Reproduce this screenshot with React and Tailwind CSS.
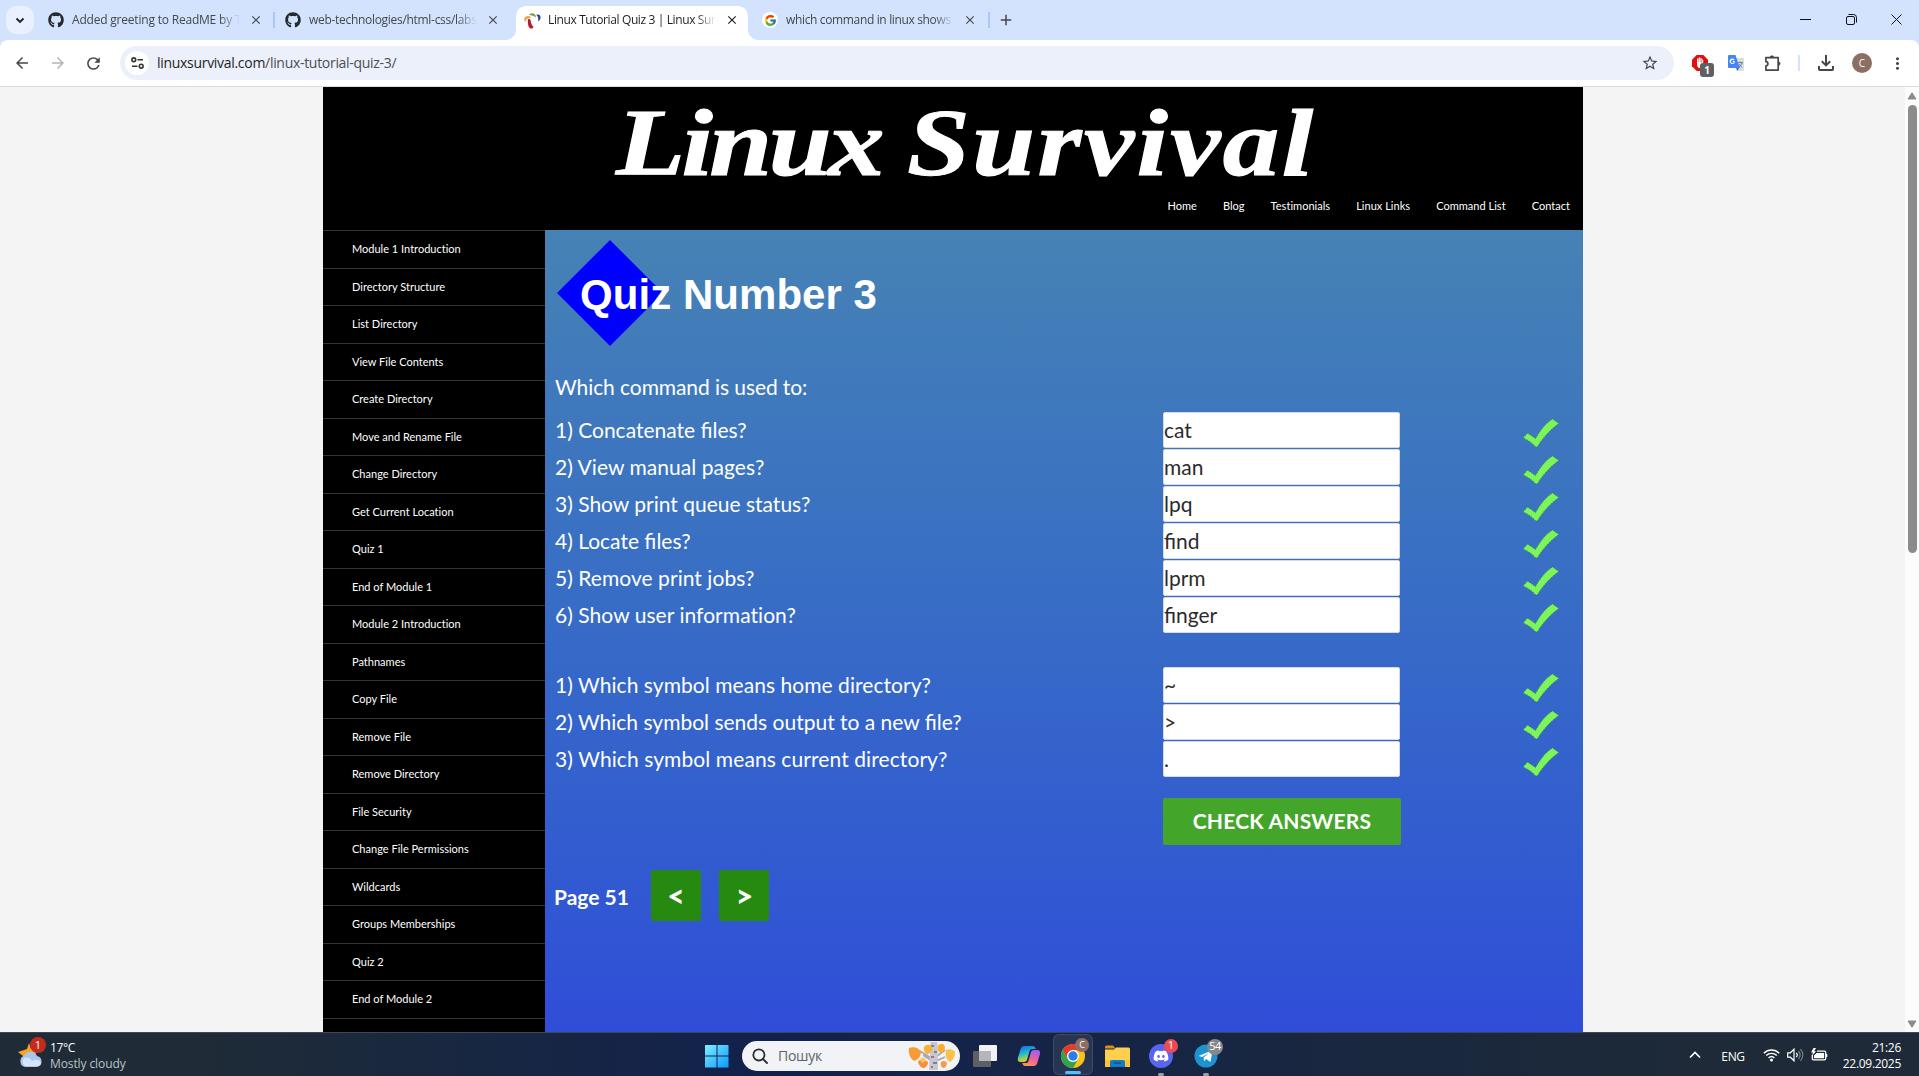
import React from 'react';
import { FaGithub, FaDiscord } from 'react-icons/fa';
import { FcGoogle } from 'react-icons/fc';
import { MdArrowBack, MdArrowForward, MdRefresh, MdStarBorder, MdMoreVert, MdClose, MdAdd } from 'react-icons/md';

const MODULES = [
  'Module 1 Introduction', 'Directory Structure', 'List Directory', 'View File Contents', 'Create Directory',
  'Move and Rename File', 'Change Directory', 'Get Current Location', 'Quiz 1', 'End of Module 1',
  'Module 2 Introduction', 'Pathnames', 'Copy File', 'Remove File', 'Remove Directory', 'File Security',
  'Change File Permissions', 'Wildcards', 'Groups Memberships', 'Quiz 2', 'End of Module 2',
];

const COMMANDS = [
  ['1) Concatenate files?', 'cat', ''],
  ['2) View manual pages?', 'man', 'tracking-[0.05px]'],
  ['3) Show print queue status?', 'lpq', ''],
  ['4) Locate files?', 'find', ''],
  ['5) Remove print jobs?', 'lprm', 'tracking-[0.05px]'],
  ['6) Show user information?', 'finger', 'tracking-[0.05px]'],
];

const SYMBOLS = [
  ['1) Which symbol means home directory?', '~', 'tracking-[0.05px]'],
  ['2) Which symbol sends output to a new file?', '>', 'word-spacing-tight'],
  ['3) Which symbol means current directory?', '.', 'tracking-[0.09px]'],
];

function SiteMark() {
  return (
    <svg width="17" height="17" viewBox="0 0 16 16" className="shrink-0">
      <path d="M4.500 2.600C6.500.4 9.500.6 11 3.200c.3.700.2 1.400-.3 1.900C9.400 3.400 7 3.200 4.500 2.600z" fill="#7aa64a" />
      <path d="M11.600 2.600c2-1 4 .2 4 2.600 0 1.800-.9 3-2.400 3.400.6-2 .2-4.400-1.600-6z" fill="#2f4390" />
      <path d="M.3 7C.3 4.400 2.500 3 5.600 4.200c.8.400 1 1 .8 1.500C4.300 5.200 2.300 6.200 1.600 9.200.7 8.800.3 8 .3 7z" fill="#f0a54a" />
      <path d="M3.900 6.800c1.100-.6 2.300-.1 2.400 1.200.2 2.300.9 4.200 2.700 6-1.200 2-3.300 2.200-4.300.3C3.700 12.400 3.300 9 3.900 6.800z" fill="#b3202c" />
    </svg>
  );
}

function Tab({ icon, title, titleClass, active }) {
  return (
    <div className={active
      ? 'relative flex h-[34px] w-[232px] items-center rounded-t-[10px] bg-white pl-2'
      : 'flex h-[28px] w-[232px] items-center pl-2'}
    >
      {active && (
        <>
          <span className="absolute bottom-0 -left-2.5 size-2.5 bg-[radial-gradient(circle_at_0_0,transparent_9.5px,white_10px)]" />
          <span className="absolute bottom-0 -right-2.5 size-2.5 bg-[radial-gradient(circle_at_100%_0,transparent_9.5px,white_10px)]" />
        </>
      )}
      <span className={active ? 'flex w-4 -translate-y-[3px] justify-center' : 'flex w-4 justify-center'}>{icon}</span>
      <span className={`ml-2 w-[168px] overflow-hidden text-xs whitespace-nowrap [mask-image:linear-gradient(to_right,black_88%,transparent)] ${titleClass} ${active ? '-translate-y-[3px] text-[#1f1f1f]' : 'text-[#45474a]'}`}>{title}</span>
      <MdClose className={active ? 'ml-[9px] size-3.5 -translate-y-[3px] text-[#1f1f1f]' : 'ml-[9px] size-3.5 text-[#45474a]'} />
    </div>
  );
}

function TabStrip() {
  return (
    <div className="flex h-10 bg-[#d3e3fd]">
      <div className="flex items-start pt-1.5 pl-1.5">
        <div className="flex size-7 items-center justify-center rounded-[10px] bg-[#e9f1fe]">
          <svg width="10" height="7" viewBox="0 0 10 7" fill="none" stroke="#1f1f1f" strokeWidth="1.800"><path d="M1.500 1.500L5 5l3.500-3.500" /></svg>
        </div>
        <div className="ml-1.5 flex">
          <Tab icon={<FaGithub className="size-4 shrink-0 text-[#24292f]" />} title="Added greeting to ReadME by T" titleClass="tracking-[-0.2px]" />
        </div>
        <span className="mt-1.5 ml-px h-4 w-0.5 bg-[#a8c7fa]" />
        <div className="ml-[2px] flex">
          <Tab icon={<FaGithub className="size-4 shrink-0 text-[#24292f]" />} title="web-technologies/html-css/labs" titleClass="tracking-[-0.3px]" />
        </div>
        <div className="ml-[7px] flex">
          <Tab active icon={<SiteMark />} title="Linux Tutorial Quiz 3 | Linux Surv" titleClass="tracking-[-0.38px]" />
        </div>
        <div className="ml-[6px] flex">
          <Tab icon={<span className="flex size-4 shrink-0 items-center justify-center rounded-full bg-white"><FcGoogle className="size-[13px]" /></span>} title="which command in linux shows" titleClass="tracking-[-0.35px]" />
        </div>
        <span className="mt-1.5 ml-[2px] h-4 w-0.5 bg-[#a8c7fa]" />
        <MdAdd className="mt-[5px] ml-[7px] size-[18px] text-[#45474a]" />
      </div>
      <div className="ml-auto flex w-[138px] items-center justify-between pr-[17px] pb-px pl-[19px]">
        <svg width="11" height="11" viewBox="0 0 11 11" stroke="#111"><path d="M0 5.500h11" /></svg>
        <svg width="11" height="11" viewBox="0 0 11 11" fill="none" stroke="#111"><rect x=".5" y="2.500" width="8" height="8" rx="1.500" /><path d="M2.500.5h5a3 3 0 0 1 3 3v5" /></svg>
        <svg width="11" height="11" viewBox="0 0 11 11" stroke="#111"><path d="M.5.5l10 10M10.500.5l-10 10" /></svg>
      </div>
    </div>
  );
}

function Toolbar() {
  return (
    <div className="bg-[#d3e3fd]">
      <div className="flex h-[47px] items-center rounded-t-lg border-b border-[#dcdcdc] bg-white pl-[13px]">
        <MdArrowBack className="size-[18px] text-[#45474a]" />
        <MdArrowForward className="ml-[18px] size-[18px] text-[#b4b5b7]" />
        <MdRefresh className="ml-[17px] size-[19px] text-[#45474a]" />
        <div className="ml-[17px] flex h-[34px] w-[1554px] items-center rounded-full bg-[#ebf0fa] pl-[5px]">
          <span className="flex size-6 items-center justify-center rounded-full bg-white">
            <svg width="13" height="12" viewBox="0 0 13 12" fill="none" stroke="#333" strokeWidth="1.600">
              <circle cx="2.800" cy="2.800" r="1.900" /><path d="M6.500 2.800H12M1 9.200h5.500" /><circle cx="10.200" cy="9.200" r="1.900" />
            </svg>
          </span>
          <span className="ml-2 text-sm tracking-[-0.3px] text-[#1f1f1f]">linuxsurvival.com<span className="text-[#4b4e52]">/linux-tutorial-quiz-3/</span></span>
          <MdStarBorder className="mr-[15px] ml-auto size-[18px] text-[#45474a]" />
        </div>
        <div className="relative ml-[18px] size-4">
          <svg width="16" height="16" viewBox="0 0 16 16">
            <path d="M4.700 0h6.600L16 4.700v6.600L11.300 16H4.700L0 11.300V4.700z" fill="#e40d0d" />
            <path d="M5 8V4.200c0-.9 1.200-.9 1.200 0V7h.4V2.900c0-.9 1.300-.9 1.300 0V7h.4V3.300c0-.9 1.300-.9 1.300 0V8h.4V5c0-.9 1.200-.9 1.200 0v5c0 2-1.200 3.200-3 3.200-1.500 0-2.200-.6-2.900-1.900z" fill="#fff" />
          </svg>
          <span className="absolute top-2 left-2 flex size-3.5 items-center justify-center rounded-[3px] bg-[#5f6062] text-[10px] font-bold text-white">1</span>
        </div>
        <svg width="16" height="16" viewBox="0 0 16 16" className="ml-5">
          <path d="M6 3h9a1 1 0 0 1 1 1v11a1 1 0 0 1-1 1H9z" fill="#dcdddf" />
          <path d="M9 16l-1-4h4z" fill="#3367d6" />
          <path d="M1 0h6.500l4.200 13H1a1 1 0 0 1-1-1V1a1 1 0 0 1 1-1z" fill="#4285f4" />
          <path d="M7 6.200H4.700v1.100h1.200c-.2.600-.7.900-1.300.9a1.600 1.600 0 1 1 1-2.800l.8-.8a2.700 2.700 0 1 0 .6 1.600z" fill="#fff" />
          <path d="M9.800 7.600H15M12.400 6.600v1M14 7.600c-.5 2.200-1.700 3.600-3 4.500M11 9c.9 1.600 2 2.600 3.200 3.200" stroke="#607988" strokeWidth=".9" fill="none" />
        </svg>
        <svg width="18" height="18" viewBox="0 0 18 18" className="ml-5" fill="none" stroke="#45474a" strokeWidth="1.700">
          <path d="M1.900 3.600h12.300v12.500H1.900v-4.200c2.700-.2 2.700-4 0-4.200z" strokeLinejoin="round" />
          <path d="M6 3.600a1.900 1.900 0 0 1 3.800 0zM14.200 7.700a1.900 1.900 0 0 1 0 3.800z" fill="#45474a" strokeWidth=".7" />
        </svg>
        <span className="ml-4 h-4 w-0.5 bg-[#d3e3fd]" />
        <svg width="16" height="16" viewBox="0 0 16 16" className="ml-[18px]" fill="none" stroke="#45474a" strokeWidth="2">
          <path d="M8 0v10M3.800 6.200L8 10.400l4.200-4.200M1 11v3.200c0 .5.300.8.800.8h12.400c.5 0 .8-.3.800-.8V11" />
        </svg>
        <span className="ml-[18px] flex size-5 items-center justify-center rounded-full bg-[#8d6e63] text-[10px] text-white">C</span>
        <MdMoreVert className="ml-[16px] size-[19px] text-[#45474a]" />
      </div>
    </div>
  );
}

function CheckMark() {
  return (
    <svg width="38" height="30" viewBox="0 0 38 30" className="mt-1.5 shrink-0">
      <path d="M1 20l4.500-5L13.500 20.500C19 11 24.500 4.500 30.500 1L37 5.500C28.500 11.500 21 19.500 15.500 28.800H13.500C10 25 6 22 1 20z" fill="#7cf55a" stroke="#3c8a5c" strokeWidth="1" strokeDasharray="1.500 1.200" />
    </svg>
  );
}

function QuizRow({ question, answer, spacing }) {
  return (
    <div className="flex h-[37px] items-start">
      <span className={`-ml-px w-[608px] pt-[2px] leading-[31px] ${spacing}`}>{question}</span>
      <span className="h-9 w-[237px] rounded-[2px] border border-[#d5dbe3] bg-white pt-px leading-[31px] text-[#2b2b2b]">{answer}</span>
      <span className="ml-[122px]"><CheckMark /></span>
    </div>
  );
}

function Site() {
  return (
    <div className="flex w-[1260px] flex-col font-['Lato',sans-serif] text-white">
      <header className="flex h-[143px] flex-col bg-black">
        <div className="flex h-[107px] items-start pt-[2px] pl-[293px]">
          <h1 className="flex origin-left scale-x-[1.190] gap-[22px] font-['Liberation_Serif',serif] text-[95px] leading-[108px] font-bold whitespace-nowrap italic [-webkit-text-stroke:1px_white]">
            <span className="tracking-[-3px]">Linux</span> <span className="tracking-[2px]">Survival</span>
          </h1>
        </div>
        <nav className="flex justify-end gap-[26px] pr-[13px] text-[11px] leading-6 tracking-[0.03px]">
          <span>Home</span><span>Blog</span><span>Testimonials</span><span>Linux Links</span><span>Command List</span><span>Contact</span>
        </nav>
      </header>
      <div className="flex flex-1">
        <aside className="w-[222px] bg-black text-[11px] tracking-[0.01px]">
          {MODULES.map((m) => (
            <div key={m} className="flex h-[37.530px] items-center border-t border-[#333] pl-[29px]">{m}</div>
          ))}
          <div className="border-t border-[#333]" />
        </aside>
        <main className="flex-1 bg-linear-to-b from-[#4682b4] to-[#304dd8] pt-2.5 pl-[11px] text-[21px]">
          <div className="relative flex h-[107px] items-center">
            <svg width="108" height="107" viewBox="0 0 108 107" className="absolute top-0 left-0"><path d="M54 0l53 53L54 106 1 53z" fill="#00f" /></svg>
            <h2 className="relative ml-[24px] pt-[3px] font-['Liberation_Sans',sans-serif] text-[42px] leading-[48px] font-bold tracking-[0.05px] whitespace-nowrap">Quiz Number 3</h2>
          </div>
          <p className="mt-[24px] -ml-px leading-[31px] tracking-[-0.08px]">Which command is used to:</p>
          <div className="mt-[10px]">{COMMANDS.map(([q, a, s]) => <QuizRow key={q} question={q} answer={a} spacing={s} />)}</div>
          <div className="mt-[33px]">{SYMBOLS.map(([q, a, s]) => <QuizRow key={q} question={q} answer={a} spacing={s} />)}</div>
          <div className="mt-5 ml-[607px] flex h-[47px] w-[238px] items-center justify-center rounded-[2px] bg-[#43a62b] pb-0.5 font-bold tracking-[0.2px]">CHECK ANSWERS</div>
          <div className="mt-[25px] flex h-[51px] items-center font-bold">
            <span className="-ml-[2px] w-[97px] pt-0.5">Page 51</span>
            <span className="flex h-[51px] w-[50px] items-center justify-center rounded-[2px] bg-[#268a10] pb-px text-[30px] font-black">&lt;</span>
            <span className="ml-[18px] flex h-[51px] w-[50px] items-center justify-center rounded-[2px] bg-[#268a10] pb-px pl-px text-[30px] font-black">&gt;</span>
          </div>
        </main>
      </div>
    </div>
  );
}

function Scrollbar() {
  return (
    <div className="ml-auto flex w-3.5 flex-col items-center bg-[#fcfcfc] pt-[5px] pb-1">
      <svg width="10" height="8" viewBox="0 0 10 8"><path d="M5 .8L9 7H1z" fill="#8b8b8b" stroke="#8b8b8b" strokeLinejoin="round" /></svg>
      <div className="mt-[5px] h-[448px] w-[9px] rounded-full bg-[#8b8b8b]" />
      <svg width="10" height="8" viewBox="0 0 10 8" className="mt-auto"><path d="M5 7.200L9 1H1z" fill="#8b8b8b" stroke="#8b8b8b" strokeLinejoin="round" /></svg>
    </div>
  );
}

function Weather() {
  return (
    <div className="flex w-[230px] items-center pt-px pl-[18px] text-xs leading-4">
      <div className="relative h-7 w-[26px]">
        <svg width="26" height="28" viewBox="0 0 26 28">
          <path d="M11 2l2 6 6 2-3 6-8 4-3-5-5-4 6-2 3-1z" fill="#f7a325" />
          <path d="M7 26a6 6 0 0 1-.6-11.500A7 7 0 0 1 19 15a5.600 5.600 0 0 1 0 11z" fill="#a9c6f2" />
          <path d="M7 25a5 5 0 0 1-1-8 7 7 0 0 1 8 3c3-2 8-2 9 2-.5 2-2 3-4 3z" fill="#d7e5fb" />
        </svg>
        <span className="absolute -top-1 left-3 flex size-4 items-center justify-center rounded-full bg-[#c42b1c] text-[11px] text-white">1</span>
      </div>
      <div className="ml-1.5 pt-0.5 text-white">
        <div className="tracking-[-0.35px]">17°C</div>
        <div className="tracking-[-0.1px] text-[#bcc3c9]">Mostly cloudy</div>
      </div>
    </div>
  );
}

function AutumnTree() {
  return (
    <svg width="48" height="29" viewBox="0 0 48 29">
      <path d="M23 17L12 10M24 20l-9-6M29 15l8-6M28 20l9-4M20 13l-3-6" stroke="#a7a4ad" strokeWidth="1.600" />
      <path d="M22.500 1h7l.5 28h-9z" fill="#c9c6d0" />
      <path d="M23 5h3M26 11h3M23 16h3M25 22h4M23 26h2" stroke="#6e6b78" strokeWidth="1.300" />
      <path d="M1 7c5-2 11 0 12 5-1 5-4 7-7 8-4-3-6-8-5-13z" fill="#f99a35" />
      <path d="M16 6c2-3 6-3 8 0 1 4-2 6-5 7-2-1-4-4-3-7z" fill="#f9b233" />
      <path d="M30 5c2-3 6-3 7 1 0 3-2 5-4 6-3-1-4-4-3-7z" fill="#fbad2e" />
      <path d="M38 9c4-2 8 0 9 2 0 5-2 8-5 10-4-2-5-7-4-12z" fill="#fcc14b" />
      <path d="M10 20c3-2 8-1 10 1 0 4-3 6-5 6-3-1-5-4-5-7z" fill="#f98f3d" />
      <path d="M33 21c3-2 5-1 6 1 0 3-2 5-4 5-2-1-3-4-2-6z" fill="#fa9a4b" />
      <path d="M13 17c2-1 4 0 5 2-1 2-3 3-4 3-1-1-2-3-1-5z" fill="#fdc75a" />
    </svg>
  );
}

function Chrome() {
  return (
    <svg width="24" height="24" viewBox="0 0 24 24">
      <circle cx="12" cy="12" r="12" fill="#fbc116" />
      <path d="M12 6h10.400A12 12 0 0 0 1.600 6l5.200 9z" fill="#e33b2e" />
      <path d="M1.600 6l5.200 9L12 18l5.200-3L12 24A12 12 0 0 1 1.600 6z" fill="#2fa350" />
      <circle cx="12" cy="12" r="6" fill="#fff" />
      <circle cx="12" cy="12" r="4.700" fill="#2b7de9" />
    </svg>
  );
}

function Taskbar() {
  return (
    <div className="flex h-11 border-t border-[#3e4853] bg-linear-to-r from-[#1f2b36] via-[#12214c] to-[#1e2a37] from-10% via-40% to-90% font-['Open_Sans',sans-serif]">
      <Weather />
      <div className="ml-[475px] flex items-center">
        <svg width="24" height="24" viewBox="0 0 24 24" className="translate-y-px">
          <defs><linearGradient id="win" x1="0" y1="0" x2="1" y2="1"><stop offset="0" stopColor="#7df0ff" /><stop offset="1" stopColor="#0a98ff" /></linearGradient></defs>
          <path d="M0 1.500Q0 1 .5 1H11.500V11.500H0zM12.500 1H23q.5 0 .5.500v10H12.500zM0 12.500h11.500V23.500H.5q-.5 0-.5-.5zM12.500 12.500h11V23q0 .5-.5.500H12.500z" fill="url(#win)" />
        </svg>
        <div className="ml-[13px] flex h-[30px] w-[218px] translate-y-px items-center rounded-full bg-[#f1f3f6] pl-2.5">
          <svg width="16" height="16" viewBox="0 0 16 16" fill="none" stroke="#2a2d33" strokeWidth="1.800"><circle cx="6.900" cy="6.900" r="5.600" /><path d="M11 11l4 4" strokeLinecap="round" /></svg>
          <span className="ml-[10px] text-sm tracking-[-0.3px] text-[#606469]">Пошук</span>
          <span className="mr-[4px] ml-auto"><AutumnTree /></span>
        </div>
        <svg width="25" height="24" viewBox="0 0 25 24" className="ml-[13px] translate-y-px">
          <rect x="0" y="7" width="18" height="16" rx="1" fill="#5c6066" /><rect x="6" y="1" width="18" height="16" rx="1" fill="#f2f2f3" /><path d="M6 7h12v10H6z" fill="#b5b6b8" />
        </svg>
        <svg width="24" height="24" viewBox="0 0 24 24" className="ml-[19px] translate-y-px">
          <defs>
            <linearGradient id="cpa" x1="0" y1="0" x2=".3" y2="1"><stop offset="0" stopColor="#1b62e0" /><stop offset=".5" stopColor="#1fb5d8" /><stop offset=".8" stopColor="#8fd05a" /><stop offset="1" stopColor="#f5c528" /></linearGradient>
            <linearGradient id="cpb" x1=".6" y1="0" x2=".2" y2="1"><stop offset="0" stopColor="#a45df0" /><stop offset=".5" stopColor="#ef5f9b" /><stop offset="1" stopColor="#fb9b52" /></linearGradient>
          </defs>
          <path d="M7 2h8.500c2 0 2.600 1.200 3.200 3H15c-1.500 0-2 .8-2.500 2.300L10.300 15c-.7 2.400-1.800 3-3.600 3H3.500C1 18 .3 16.200 1 13.500L3.600 5C4.300 2.900 5.300 2 7 2z" fill="url(#cpa)" />
          <path d="M17.200 6h3c2.600 0 3.400 1.800 2.600 4.500L20.300 19c-.7 2.100-1.700 3-3.400 3H8.500c-2 0-2.700-1.200-3.200-3H9c1.500 0 2-.8 2.500-2.300L13.700 9c.7-2.400 1.800-3 3.500-3z" fill="url(#cpb)" />
        </svg>
        <div className="relative ml-[12px] flex h-[41px] w-10 items-center justify-center rounded-md border border-white/10 bg-white/8">
          <span className="translate-y-px"><Chrome /></span>
          <span className="absolute top-[3px] right-[3px] flex size-3.5 items-center justify-center rounded-full bg-[#8d6e63] text-[9px] text-white">C</span>
          <span className="absolute bottom-0 h-[3px] w-4 rounded-full bg-[#4cc2ff]" />
        </div>
        <svg width="25" height="24" viewBox="0 0 25 24" className="ml-3 translate-y-px">
          <path d="M0 3q0-1.500 1.500-1.500H8l2.500 3H0z" fill="#d9930e" /><path d="M0 5.500h9l2-2h12.500q1.500 0 1.500 1.500v18H0z" fill="#ffd04f" />
          <path d="M0 16h25v5.500Q25 23 23.500 23H1.500Q0 23 0 21.500z" fill="#fcc23a" /><path d="M5 23v-5q0-2 2-2h11q2 0 2 2v5z" fill="#117bc8" /><path d="M9 19h7" stroke="#0a5597" strokeWidth="1.500" />
        </svg>
        <div className="relative ml-[19px] flex h-11 w-6 items-center">
          <span className="flex size-6 translate-y-px items-center justify-center rounded-full bg-[#5865f2]"><FaDiscord className="size-4 text-white" /></span>
          <span className="absolute top-[6px] left-[15px] flex size-3.5 items-center justify-center rounded-full bg-[#ee4b50] text-[11px] text-white">1</span>
          <span className="absolute bottom-px left-[9px] h-[3px] w-1.5 rounded-full bg-[#99a0ad]" />
        </div>
        <div className="relative ml-[21px] flex h-11 w-6 items-center">
          <svg width="24" height="24" viewBox="0 0 24 24" className="translate-y-px">
            <circle cx="12" cy="12" r="11.500" fill="#1d93d2" /><path d="M4.500 12L18.500 6.300 16.500 18l-4.300-3-2 2.200-.6-3.700 5.900-5-7.300 4.600z" fill="#fff" />
          </svg>
          <span className="absolute top-[6px] left-[13px] flex size-4 items-center justify-center rounded-full bg-[#858789] text-[11px] tracking-[-0.5px] text-white">54</span>
          <span className="absolute bottom-px left-[9px] h-[3px] w-1.5 rounded-full bg-[#99a0ad]" />
        </div>
      </div>
      <div className="ml-auto flex items-center pr-[18px] text-xs text-white">
        <svg width="12" height="8" viewBox="0 0 12 8" fill="none" stroke="#fff" strokeWidth="1.600"><path d="M1 6.500l5-5 5 5" /></svg>
        <span className="ml-[20px] pt-1 tracking-[-0.3px]">ENG</span>
        <svg width="17" height="14" viewBox="0 0 17 14" fill="none" stroke="#fff" strokeWidth="1.400" className="ml-[18px]">
          <path d="M.8 5.200c4.400-4.300 11-4.300 15.400 0M3.200 7.600c3-3 7.600-3 10.600 0M5.600 10c1.700-1.700 4.100-1.700 5.800 0" /><circle cx="8.500" cy="12" r="1.500" fill="#fff" stroke="none" />
        </svg>
        <svg width="17" height="14" viewBox="0 0 17 14" fill="none" stroke="#fff" strokeWidth="1.200" className="ml-[7px]">
          <path d="M.7 4.800h2.600L7 1.200v11.600L3.300 9.200H.7zM9.200 4.800c1.200 1.200 1.200 3.200 0 4.400" /><path d="M11.400 3c2.200 2.200 2.200 5.800 0 8M13.400 1.200c3.200 3.200 3.200 8.400 0 11.600" stroke="#77818d" />
        </svg>
        <svg width="17" height="14" viewBox="0 0 17 14" className="ml-[7px]">
          <path d="M6 3.200h7.500q1.200 0 1.200 1.200v6.200q0 1.200-1.200 1.200h-11q-1.200 0-1.200-1.200V7" fill="none" stroke="#fff" strokeWidth="1.300" />
          <path d="M5.500 5h7.600v5.200H3V7.500zM15 6h1.300v3H15zM2.500 0L0 4.500h2L1 8l4-4.800H3.200L5 0z" fill="#fff" />
        </svg>
        <div className="ml-[15px] pt-[2px] text-right leading-4 tracking-[-0.3px]">
          <div>21:26</div>
          <div>22.09.2025</div>
        </div>
      </div>
    </div>
  );
}

export default function App() {
  return (
    <div className="flex h-[1076px] w-[1919px] flex-col overflow-hidden font-['Open_Sans',sans-serif]">
      <TabStrip />
      <Toolbar />
      <div className="flex h-[945px] overflow-hidden bg-[#f4f4f4] pl-[323px]">
        <Site />
        <Scrollbar />
      </div>
      <Taskbar />
    </div>
  );
}
